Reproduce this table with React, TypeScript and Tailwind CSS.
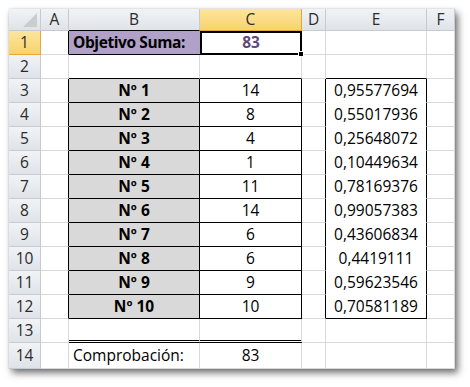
import React from "react";

// column widths: row header, A, B, C, D, E, F
const cols = "grid-cols-[32px_28px_131px_102px_24px_101px_28px]";

const nums = [14, 8, 4, 1, 11, 14, 6, 6, 9, 10];
const rands = [
  "0,95577694",
  "0,55017936",
  "0,25648072",
  "0,10449634",
  "0,78169376",
  "0,99057383",
  "0,43606834",
  "0,4419111",
  "0,59623546",
  "0,70581189",
];

const grid = "border-[#d9d9d9]";
const head =
  "bg-gradient-to-b from-[#f1f3f6] to-[#dfe3e8] border-r border-b border-[#c5cbd3] flex items-center justify-center text-[#2b2b2b]";
const headSel =
  "bg-gradient-to-b from-[#fde59f] to-[#f8d36a] border-r border-b border-[#e5a93b] flex items-center justify-center text-[#2b2b2b]";

function RowHead({ n, sel }: { n: number; sel?: boolean }) {
  return <div className={sel ? headSel : head}>{n}</div>;
}

export default function App() {
  return (
    <div className="w-[470px] h-[387px] bg-white pt-[9px] pl-[9px] font-['Open_Sans',sans-serif] text-[15.5px] leading-none text-black">
      <div className="w-[446px] shadow-[3px_4px_7px_rgba(0,0,0,0.55),0_0_2px_rgba(0,0,0,0.15)]">
        {/* cabecera de columnas */}
        <div className={`grid ${cols} h-[22px]`}>
          <div className={`${head} relative`}>
            <svg className="absolute right-[3px] bottom-[3px]" width="14" height="14" viewBox="0 0 14 14">
              <polygon points="14,0 14,14 0,14" fill="#c9ccd1" />
            </svg>
          </div>
          <div className={head}>A</div>
          <div className={`${head} border-b-black`}>B</div>
          <div className={headSel}>C</div>
          <div className={head}>D</div>
          <div className={head}>E</div>
          <div className={head}>F</div>
        </div>

        {/* fila 1 */}
        <div className={`grid ${cols} h-[24px]`}>
          <RowHead n={1} sel />
          <div className="border-r border-b border-r-black border-b-[#d9d9d9]" />
          <div className="bg-[#b1a0c7] border-b border-black flex items-center pl-[4px] font-bold tracking-[-0.4px]">
            Objetivo Suma:
          </div>
          <div className="relative border-2 border-black">
            <div className="h-full border border-white flex items-center justify-center font-bold text-[#60497a]">
              83
            </div>
            <div className="absolute -right-[4px] -bottom-[4px] w-[6px] h-[6px] bg-black border border-white" />
          </div>
          <div className={`border-r border-b ${grid}`} />
          <div className={`border-r border-b ${grid}`} />
          <div className={`border-r border-b ${grid}`} />
        </div>

        {/* fila 2 */}
        <div className={`grid ${cols} h-[24px]`}>
          <RowHead n={2} />
          <div className={`border-r border-b ${grid}`} />
          <div className="border-r border-b border-r-[#d9d9d9] border-b-black" />
          <div className="border-r border-b border-r-[#d9d9d9] border-b-black" />
          <div className={`border-r border-b ${grid}`} />
          <div className="border-r border-b border-r-[#d9d9d9] border-b-black" />
          <div className={`border-r border-b ${grid}`} />
        </div>

        {/* filas 3-12 */}
        {nums.map((v, i) => (
          <div key={i} className={`grid ${cols} h-[24px]`}>
            <RowHead n={i + 3} />
            <div className="border-r border-b border-r-black border-b-[#d9d9d9]" />
            <div className="bg-[#d9d9d9] border-r border-b border-black flex items-center justify-center font-bold">
              Nº {i + 1}
            </div>
            <div className="border-r border-b border-black flex items-center justify-center">{v}</div>
            <div className="border-r border-b border-r-black border-b-[#d9d9d9]" />
            <div
              className={`border-r border-b border-r-black ${i === 9 ? "border-b-black" : "border-b-white"} flex items-center justify-center`}
            >
              {rands[i]}
            </div>
            <div className={`border-r border-b ${grid}`} />
          </div>
        ))}

        {/* fila 13 */}
        <div className={`grid ${cols} h-[24px]`}>
          <RowHead n={13} />
          <div className={`border-r border-b ${grid}`} />
          <div className="border-r border-b-[3px] border-b-black border-double border-r-[#d9d9d9]" />
          <div className="border-r border-b-[3px] border-b-black border-double border-r-[#d9d9d9]" />
          <div className={`border-r border-b ${grid}`} />
          <div className={`border-r border-b ${grid}`} />
          <div className={`border-r border-b ${grid}`} />
        </div>

        {/* fila 14 */}
        <div className={`grid ${cols} h-[26px]`}>
          <RowHead n={14} />
          <div className={`border-r border-b ${grid}`} />
          <div className={`border-r border-b ${grid} flex items-center pl-[4px]`}>Comprobación:</div>
          <div className={`border-r border-b ${grid} flex items-center justify-center`}>83</div>
          <div className={`border-r border-b ${grid}`} />
          <div className={`border-r border-b ${grid}`} />
          <div className={`border-r border-b ${grid}`} />
        </div>
      </div>
    </div>
  );
}
